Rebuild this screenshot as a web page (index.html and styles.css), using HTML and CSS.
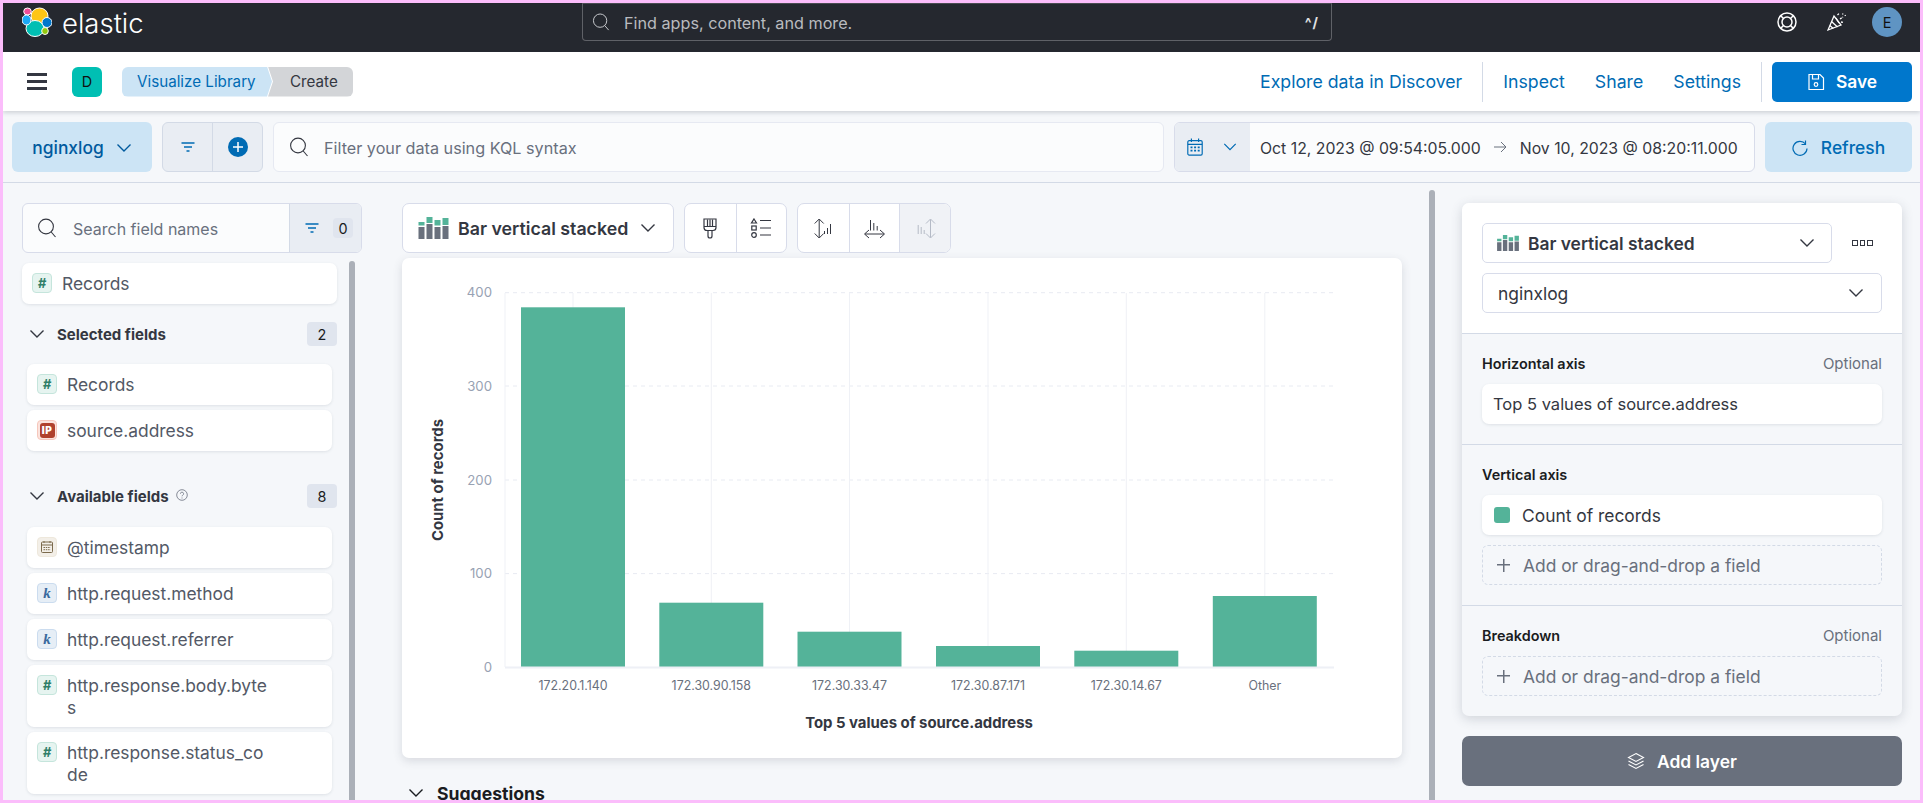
FILE: index.html
```html
<!DOCTYPE html>
<html lang="en">
<head>
<meta charset="utf-8">
<title>Visualize Library - Elastic</title>
<link rel="stylesheet" href="styles.css">
</head>
<body>
<svg class="defs" aria-hidden="true">
  <symbol id="i-search" viewBox="0 0 20 20"><circle cx="9" cy="8.5" r="7.4" fill="none" stroke="currentColor" stroke-width="1.1"/><path d="M14.2 14l4.3 5" fill="none" stroke="currentColor" stroke-width="1.1"/></symbol>
  <symbol id="i-chev" viewBox="0 0 16 16"><path d="M1.5 4.5L8 11l6.5-6.5" fill="none" stroke="currentColor" stroke-width="1.4"/></symbol>
  <symbol id="i-filter" viewBox="0 0 16 16"><path d="M1.5 4h13M4 8h8M6.5 12h3" fill="none" stroke="currentColor" stroke-width="1.3"/></symbol>
  <symbol id="i-bars" viewBox="0 0 30 22"><g fill="#69707d"><path d="M0 10h6v12H0zM8 7h6v15H8zM16 10h6v12h-6zM24 9h6v13h-6z"/></g><g fill="#54b399"><path d="M0 5h6v3.5H0zM8 0h6v6H8zM16 3h6v5.500h-6zM24 1h6v7h-6z"/></g></symbol>
</svg>

<header class="topbar">
  <div class="brand">
    <svg class="logo" viewBox="0 0 30 30" aria-hidden="true">
      <ellipse cx="17.500" cy="9" rx="8.500" ry="8" fill="#fec514" stroke="#fff" stroke-width="1"/>
      <ellipse cx="13" cy="21.500" rx="9" ry="8" fill="#00bfb3" stroke="#fff" stroke-width="1"/>
      <ellipse cx="5.500" cy="4.500" rx="3.800" ry="3.500" fill="#f04e98" stroke="#fff" stroke-width="1"/>
      <ellipse cx="4.500" cy="13" rx="4.500" ry="5" fill="#1ba9f5" stroke="#fff" stroke-width="1"/>
      <ellipse cx="25" cy="15.500" rx="5" ry="5" fill="#0077cc" stroke="#fff" stroke-width="1"/>
      <ellipse cx="23" cy="24" rx="3.300" ry="3.500" fill="#93c90e" stroke="#fff" stroke-width="1"/>
    </svg>
    <span class="brand-name">elastic</span>
  </div>
  <div class="global-search">
    <svg class="ico-18"><use href="#i-search"/></svg>
    <span class="global-text">Find apps, content, and more.</span>
    <span class="kbd">^/</span>
  </div>
  <div class="top-actions">
    <svg class="ico-20" viewBox="0 0 20 20" aria-hidden="true"><g fill="none" stroke="#fff" stroke-width="1.500"><circle cx="10" cy="10" r="9"/><circle cx="10" cy="10" r="5"/><path d="M3.500 3.500l3 3M16.500 3.500l-3 3M3.500 16.500l3-3M16.500 16.500l-3-3"/></g></svg>
    <svg class="ico-20" viewBox="0 0 20 20" aria-hidden="true"><g fill="none" stroke="#fff" stroke-width="1.300"><path d="M7 4L1 18l13-5z"/><path d="M4.500 9.500l6 5.500M2.800 13.500l3.500 3M9 6l3 5"/><path d="M10.500 3l2-2M13 7l3-2M14 10l2 .5M15.500 1.500l.5 1M18 3l.5 1" stroke-dasharray="2 1"/></g></svg>
    <div class="avatar">E</div>
  </div>
</header>

<nav class="appbar">
  <div class="burger"><span></span><span></span><span></span></div>
  <div class="space-badge">D</div>
  <div class="crumbs">
    <span class="crumb crumb-link">Visualize Library</span>
    <span class="crumb crumb-cur">Create</span>
  </div>
  <div class="app-links">
    <a class="app-link link-first">Explore data in Discover</a>
    <span class="app-div"></span>
    <a class="app-link link-inspect">Inspect</a>
    <a class="app-link link-share">Share</a>
    <a class="app-link link-settings">Settings</a>
    <span class="app-div div-last"></span>
    <button class="save-btn">
      <svg class="ico-18" viewBox="0 0 18 18" aria-hidden="true"><g fill="none" stroke="#fff" stroke-width="1.200"><path d="M2 1.500h11l3.500 3.500v11.500H2z"/><path d="M5.500 1.500v4.500h6V1.500"/><circle cx="9" cy="11.500" r="1.800"/></g></svg>
      Save
    </button>
  </div>
</nav>

<section class="querybar">
  <button class="dv-btn">nginxlog <svg class="ico-16"><use href="#i-chev"/></svg></button>
  <div class="filter-group">
    <span class="fg-cell"><svg class="ico-16 blue"><use href="#i-filter"/></svg></span>
    <span class="fg-cell fg-plus"><svg class="ico-20" viewBox="0 0 20 20" aria-hidden="true"><circle cx="10" cy="10" r="10" fill="#006bb4"/><path d="M10 5v10M5 10h10" stroke="#fff" stroke-width="1.500"/></svg></span>
  </div>
  <div class="kql">
    <svg class="ico-20 grey-dark"><use href="#i-search"/></svg>
    <span class="kql-text">Filter your data using KQL syntax</span>
  </div>
  <div class="datepicker">
    <span class="cal-cell">
      <svg class="ico-18" viewBox="0 0 18 20" aria-hidden="true"><g fill="none" stroke="#006bb4" stroke-width="1.300"><rect x="1" y="3" width="16" height="16" rx="1.500"/><path d="M1 7h16M5 0.500v4M13 0.500v4"/></g><path d="M4 9.500h2.200v2H4zM8 9.500h2.200v2H8zM12 9.500h2.200v2H12zM4 13h2.200v2H4zM8 13h2.200v2H8zM12 13h2.200v2H12z" fill="#006bb4"/></svg>
      <svg class="ico-14 blue"><use href="#i-chev"/></svg>
    </span>
    <span class="date-text">Oct 12, 2023 @ 09:54:05.000</span>
    <svg class="date-arrow" viewBox="0 0 14 14" aria-hidden="true"><path d="M1 7h12M8 2l5 5-5 5" fill="none" stroke="#69707d" stroke-width="1"/></svg>
    <span class="date-text">Nov 10, 2023 @ 08:20:11.000</span>
  </div>
  <button class="refresh-btn">
    <svg class="ico-16" viewBox="0 0 16 16" aria-hidden="true"><path d="M13.500 4A7 7 0 1 0 15 8.500" fill="none" stroke="#006bb4" stroke-width="1.200"/><path d="M13.500 0.500V4.500H9.500" fill="none" stroke="#006bb4" stroke-width="1.200"/></svg>
    Refresh
  </button>
</section>

<main class="workspace">
  <aside class="fields">
    <div class="field-search">
      <div class="fs-input">
        <svg class="ico-20 grey-dark"><use href="#i-search"/></svg>
        <span class="fs-text">Search field names</span>
      </div>
      <div class="fs-filter">
        <svg class="ico-16 blue"><use href="#i-filter"/></svg>
        <span class="fs-count">0</span>
      </div>
    </div>
    <div class="fields-body">
      <div class="fields-list">
        <div class="fcard fcard-top"><span class="token t-num">#</span><span class="fname">Records</span></div>
        <div class="acc-head acc-sel">
          <svg class="ico-16"><use href="#i-chev"/></svg>
          <span class="acc-title">Selected fields</span>
          <span class="acc-badge">2</span>
        </div>
        <div class="fcard"><span class="token t-num">#</span><span class="fname">Records</span></div>
        <div class="fcard"><span class="token t-ip"><b>IP</b></span><span class="fname">source.address</span></div>
        <div class="acc-head acc-avail">
          <svg class="ico-16"><use href="#i-chev"/></svg>
          <span class="acc-title">Available fields</span>
          <svg class="help" viewBox="0 0 12 12" aria-hidden="true"><circle cx="6" cy="6" r="5.300" fill="none" stroke="#69707d" stroke-width=".8"/><path d="M4.400 4.700a1.600 1.600 0 1 1 2.300 1.500c-.5.300-.7.500-.7 1.100M6 8.500v1" fill="none" stroke="#69707d" stroke-width=".8"/></svg>
          <span class="acc-badge">8</span>
        </div>
        <div class="fcard"><span class="token t-date"><svg class="ico-14" viewBox="0 0 14 14" aria-hidden="true"><g fill="none" stroke="#7b6a4c" stroke-width="1"><rect x="1.500" y="2" width="11" height="10.500" rx="1"/><path d="M1.500 5h11M4 1v2M10 1v2"/><path d="M3.500 7.500h7M3.500 9.700h7" stroke-dasharray="1.500 .8"/></g></svg></span><span class="fname">@timestamp</span></div>
        <div class="fcard"><span class="token t-key">k</span><span class="fname">http.request.method</span></div>
        <div class="fcard"><span class="token t-key">k</span><span class="fname">http.request.referrer</span></div>
        <div class="fcard"><span class="token t-num">#</span><span class="fname">http.response.body.byte<br>s</span></div>
        <div class="fcard"><span class="token t-num">#</span><span class="fname">http.response.status_co<br>de</span></div>
      </div>
      <div class="scroll-thumb"></div>
    </div>
  </aside>

  <section class="center">
    <div class="chart-tools">
      <button class="type-btn">
        <svg class="type-ico"><use href="#i-bars"/></svg>
        <span>Bar vertical stacked</span>
        <svg class="ico-16"><use href="#i-chev"/></svg>
      </button>
      <div class="tool-group">
        <span class="tool-cell"><svg class="ico-22" viewBox="0 0 22 22" aria-hidden="true"><g fill="none" stroke="#343741" stroke-width="1.200"><path d="M5 2h12v8.500c0 2-1 3-3 3H8c-2 0-3-1-3-3z"/><path d="M5 9.500h12M8.500 2.500v6.500M11 2.500v6.500M13.500 2.500v6.500"/><path d="M9 13.500v5.500a2 2 0 0 0 4 0v-5.500"/></g></svg></span>
        <span class="tool-cell"><svg class="ico-22" viewBox="0 0 22 22" aria-hidden="true"><g fill="none" stroke="#343741" stroke-width="1.200"><path d="M4 2l2.500 4h-5z"/><rect x="1.800" y="9" width="4.400" height="4"/><circle cx="4" cy="18" r="2.300"/><path d="M10 3.500h11M10 11h11M10 18h11"/></g></svg></span>
      </div>
      <div class="tool-group">
        <span class="tool-cell"><svg class="ico-22" viewBox="0 0 22 22" aria-hidden="true"><g fill="none" stroke="#343741" stroke-width="1"><path d="M7.200 2.500v18M2.700 6.500l4.500-4.500 4.500 4.500M2.700 16.500l4.500 4.500 4.500-4.500"/><path d="M12.500 17v-3M15.500 17v-6M18.500 17V7"/></g></svg></span>
        <span class="tool-cell"><svg class="ico-22" viewBox="0 0 22 22" aria-hidden="true"><g fill="none" stroke="#343741" stroke-width="1"><path d="M2 17h19M6 13l-4.500 4 4.500 4M17 13l4.500 4-4.500 4"/><path d="M7.500 13.500V3M10.800 13.500V6M14.200 13.500V9"/></g></svg></span>
        <span class="tool-cell tool-off"><svg class="ico-22" viewBox="0 0 22 22" aria-hidden="true"><g fill="none" stroke="#b4bac6" stroke-width="1"><path d="M16.500 2.500v18M12 6.500l4.500-4.500 4.500 4.500M12 16.500l4.500 4.500 4.500-4.500"/><path d="M4.200 17V8M7.200 17v-7M10.200 17v-4"/></g></svg></span>
      </div>
    </div>

    <div class="chart-card">
      <svg class="chart" viewBox="0 0 1000 500" role="img" aria-label="Bar chart">
        <g class="grid">
          <path class="dash" d="M103 34.700H932M103 128H932M103 222H932M103 315.600H932"/>
          <path d="M103 35V409M171 35V409M309.300 35V409M447.500 35V409M586 35V409M724.300 35V409M862.800 35V409"/>
        </g>
        <g class="bars">
          <rect x="119" y="49.300" width="104" height="360"/>
          <rect x="257.300" y="344.700" width="104" height="64.600"/>
          <rect x="395.500" y="373.700" width="104" height="35.600"/>
          <rect x="534" y="388" width="104" height="21.300"/>
          <rect x="672.300" y="392.700" width="104" height="16.600"/>
          <rect x="810.800" y="338" width="104" height="71.300"/>
        </g>
        <path class="baseline" d="M103 409.600H932"/>
        <g class="ytick">
          <text x="90" y="39">400</text>
          <text x="90" y="132.500">300</text>
          <text x="90" y="226.500">200</text>
          <text x="90" y="319.500">100</text>
          <text x="90" y="413.500">0</text>
        </g>
        <g class="xtick">
          <text x="171" y="431.500">172.20.1.140</text>
          <text x="309.300" y="431.500">172.30.90.158</text>
          <text x="447.500" y="431.500">172.30.33.47</text>
          <text x="586" y="431.500">172.30.87.171</text>
          <text x="724.300" y="431.500">172.30.14.67</text>
          <text x="862.800" y="431.500">Other</text>
        </g>
        <text class="axis-title" x="517" y="470">Top 5 values of source.address</text>
        <text class="axis-title" transform="translate(41 222) rotate(-90)">Count of records</text>
      </svg>
    </div>

    <div class="suggestions">
      <svg class="ico-16"><use href="#i-chev"/></svg>
      <span>Suggestions</span>
    </div>
  </section>

  <div class="splitter"></div>

  <aside class="config">
    <div class="config-card">
      <div class="config-top">
        <div class="config-row">
          <button class="select select-type">
            <svg class="mini-bars"><use href="#i-bars"/></svg>
            <span class="select-label">Bar vertical stacked</span>
            <svg class="ico-16"><use href="#i-chev"/></svg>
          </button>
          <span class="dots"><i></i><i></i><i></i></span>
        </div>
        <button class="select select-index">
          <span class="select-plain">nginxlog</span>
          <svg class="ico-16"><use href="#i-chev"/></svg>
        </button>
      </div>
      <div class="config-sec">
        <div class="sec-head"><b>Horizontal axis</b><span>Optional</span></div>
        <div class="dim">Top 5 values of source.address</div>
      </div>
      <div class="config-sec">
        <div class="sec-head"><b>Vertical axis</b></div>
        <div class="dim dim-color"><span class="swatch"></span>Count of records</div>
        <div class="add-field add-gap"><span class="plus"></span>Add or drag-and-drop a field</div>
      </div>
      <div class="config-sec">
        <div class="sec-head"><b>Breakdown</b><span>Optional</span></div>
        <div class="add-field"><span class="plus"></span>Add or drag-and-drop a field</div>
      </div>
    </div>
    <button class="add-layer">
      <svg class="ico-18" viewBox="0 0 18 18" aria-hidden="true"><g fill="none" stroke="#fff" stroke-width="1.100"><path d="M9 1.500l7.500 4L9 9.500l-7.500-4z"/><path d="M1.500 9L9 13l7.500-4M1.500 12.500L9 16.500l7.500-4"/></g></svg>
      Add layer
    </button>
  </aside>
</main>
</body>
</html>
```

FILE: styles.css
```css
* { box-sizing: border-box; }
html, body { margin: 0; height: 100%; }
body {
  width: 1923px;
  height: 803px;
  overflow: hidden;
  border: 3px solid #fbbdfb;
  background: #f5f7fa;
  font-family: Inter, "Noto Sans", "Liberation Sans", sans-serif;
  font-size: 17.4px;
  color: #343741;
  display: flex;
  flex-direction: column;
}
button { font: inherit; border: 0; padding: 0; cursor: pointer; }
.defs { position: absolute; width: 0; height: 0; }
.ico-14 { width: 14px; height: 14px; flex: none; }
.ico-16 { width: 16px; height: 16px; flex: none; }
.ico-18 { width: 18px; height: 18px; flex: none; }
.ico-20 { width: 20px; height: 20px; flex: none; }
.ico-22 { width: 22px; height: 22px; flex: none; }
.blue { color: #006bb4; }
.grey-dark { color: #343741; }

/* top bar */
.topbar {
  height: 49px;
  flex: none;
  background: #25282f;
  display: flex;
  align-items: flex-start;
  color: #fff;
  position: relative;
}
.brand { display: flex; align-items: center; width: 579px; padding: 4px 0 0 19px; height: 34px; }
.logo { width: 30px; height: 30px; flex: none; }
.brand-name { margin-left: 10px; font-size: 27.5px; font-weight: 300; padding-top: 1px; line-height: 30px; color: #fff; }
.global-search {
  width: 750px;
  height: 38px;
  border: 1px solid #5f6167;
  border-top-color: #4a4c52;
  border-radius: 0 0 4px 4px;
  display: flex;
  align-items: center;
  padding: 0 12px 0 9px;
  color: #c6c8cc;
  background: #25282f;
}
.global-text { margin-left: 14px; flex: 1; font-size: 16.2px; color: #b9bbbf; padding-top: 2px; }
.kbd { font-size: 14px; font-weight: 700; color: #e0e0e2; letter-spacing: 1px; }
.top-actions { flex: 1; display: flex; align-items: center; height: 30px; margin-top: 4px; padding-left: 445px; }
.top-actions .ico-20:nth-child(2) { margin-left: 30px; }
.avatar {
  width: 30px; height: 30px; margin-left: 25px; border-radius: 50%;
  background: #5f94c3; color: #111; font-size: 14.4px;
  display: flex; align-items: center; justify-content: center;
}

/* app bar */
.appbar {
  height: 59px;
  flex: none;
  background: #fff;
  display: flex;
  align-items: center;
  box-shadow: 0 2px 4px rgba(60, 70, 90, .2);
  position: relative;
  z-index: 2;
}
.burger { width: 20px; margin-left: 24px; display: flex; flex-direction: column; gap: 4.500px; }
.burger span { height: 2.500px; background: #343741; display: block; }
.space-badge {
  width: 30px; height: 30px; margin-left: 25px; border-radius: 6px;
  background: #00bfb3; color: #111; font-size: 14.4px;
  display: flex; align-items: center; justify-content: center;
}
.crumbs { display: flex; margin-left: 20px; height: 30px; font-size: 15.2px; }
.crumb { display: flex; align-items: center; height: 30px; }
.crumb-link {
  width: 150px; padding-left: 15px; background: #cce4f5; color: #006bb4; white-space: nowrap;
  border-radius: 6px 0 0 6px;
  clip-path: polygon(0 0, 145px 0, 100% 50%, 145px 100%, 0 100%);
}
.crumb-cur {
  width: 85px; margin-left: -4px; padding-left: 22px; background: #d3d5d8; color: #343741;
  border-radius: 0 6px 6px 0;
  clip-path: polygon(0 0, 100% 0, 100% 100%, 0 100%, 5px 50%);
}
.app-links { margin-left: auto; display: flex; align-items: center; padding-right: 8px; }
.app-link { color: #006bb4; font-size: 17.7px; white-space: nowrap; }
.app-div { width: 1px; height: 40px; background: #d3dae6; margin: 0 20px; }
.link-share { margin-left: 30px; }
.link-settings { margin-left: 30px; }
.div-last { margin: 0 10px 0 20px; }
.save-btn {
  width: 140px; height: 40px; border-radius: 5px; background: #0077cc; color: #fff;
  display: flex; align-items: center; justify-content: center; gap: 11px; font-weight: 600;
}

/* query bar */
.querybar {
  height: 72px;
  flex: none;
  border-bottom: 1px solid #d3dae6;
  padding: 11px 6px 0 9px;
  display: flex;
  align-items: flex-start;
  gap: 10px;
}
.querybar > * { height: 50px; }
.dv-btn {
  width: 140px; border-radius: 6px; background: #cce4f5; color: #005a9e; padding-top: 1px;
  display: flex; align-items: center; justify-content: center; gap: 12px; font-weight: 500;
}
.filter-group {
  width: 101px; display: flex; background: #e9edf3; border: 1px solid #d3dae6; border-radius: 6px;
}
.fg-cell { flex: 1; display: flex; align-items: center; justify-content: center; }
.fg-plus { border-left: 1px solid #d3dae6; }
.kql {
  width: 891px; background: #fbfcfd; border: 1px solid #e6e9f2; border-radius: 6px;
  display: flex; align-items: center; padding-left: 15px;
}
.kql-text { margin-left: 15px; color: #69707d; font-size: 16.2px; padding-top: 2px; }
.datepicker {
  width: 581px; background: #fbfcfd; border: 1px solid #d8dcea; border-radius: 6px;
  display: flex; align-items: center; overflow: hidden; white-space: nowrap;
}
.cal-cell {
  width: 75px; height: 100%; flex: none; background: #e9edf3; display: flex; align-items: center;
  padding-left: 11px; gap: 19px;
}
.date-text { color: #343741; font-size: 15.8px; padding-top: 2px; }
.cal-cell + .date-text { margin-left: 10px; }
.date-arrow { width: 14px; height: 14px; margin: 0 13px 0 12px; flex: none; }
.refresh-btn {
  width: 147px; border-radius: 6px; background: #cce4f5; color: #006bb4; padding-top: 1px;
  display: flex; align-items: center; justify-content: center; gap: 13px; font-weight: 500;
}

/* workspace */
.workspace { flex: 1; min-height: 0; display: flex; overflow: hidden; }
.fields { width: 399px; flex: none; padding: 20px 0 0 19px; }
.field-search {
  width: 340px; height: 50px; display: flex; background: #fbfcfd;
  border: 1px solid #d8dcea; border-radius: 6px; overflow: hidden;
}
.fs-input { flex: 1; display: flex; align-items: center; padding-left: 14px; }
.fs-text { margin-left: 16px; color: #69707d; font-size: 16px; padding-top: 2px; }
.fs-filter {
  width: 72px; background: #e9edf3; border-left: 1px solid #d3dae6;
  display: flex; align-items: center; padding-left: 14px; gap: 13px;
}
.fs-count {
  width: 20px; height: 20px; background: #e0e5ee; border-radius: 4px; font-size: 14.4px; color: #1a1c21;
  display: flex; align-items: center; justify-content: center;
}
.fields-body { display: flex; margin-top: 8px; height: 540px; }
.fields-list { width: 315px; padding-top: 2px; flex: none; }
.scroll-thumb { width: 6px; margin-left: 12px; background: #abb0b8; border-radius: 3px 3px 0 0; flex: none; height: 545px; }
.fcard {
  min-height: 41px; margin: 0 5px 5px; padding: 10px 10px 9px 10px; background: #fff; border-radius: 7px;
  box-shadow: 0 1px 3px rgba(60, 70, 90, .12);
  display: flex; align-items: flex-start;
}
.fcard-top { margin: 0; }
.token {
  width: 20px; height: 20px; flex: none; border-radius: 4px; border: 1px solid;
  display: flex; align-items: center; justify-content: center; font-size: 13px; font-weight: 700; font-style: italic; margin-top: 0;
}
.t-num { background: #e6f4f0; border-color: #c5e5dc; color: #2f7f68; }
.t-key { background: #e6eef6; border-color: #cbdcef; color: #3a6a9e; font-family: "Liberation Serif", serif; font-size: 15px; }
.t-date { background: #f3efe8; border-color: #eee8dc; }
.t-ip { background: #fbe3dd; border-color: #f6c7bc; }
.t-ip b { background: #b0412d; color: #fff; font-size: 10px; font-style: normal; width: 15px; height: 15px; border-radius: 3px; display: flex; align-items: center; justify-content: center; letter-spacing: .5px; }
.fname { margin-left: 10px; color: #535966; line-height: 21.5px; }
.acc-head { display: flex; align-items: center; padding-left: 7px; height: 24px; }
.acc-head .ico-16 { width: 16px; height: 16px; }
.acc-sel { margin: 18px 0 18px; }
.acc-avail { margin: 33px 0 19px; }
.acc-title { margin-left: 12px; font-size: 15px; font-weight: 700; color: #343741; }
.help { width: 12px; height: 12px; margin-left: 7px; margin-top: -3px; }
.acc-badge {
  margin-left: auto; width: 30px; height: 24px; border-radius: 4px; background: #e0e5ee; color: #1a1c21;
  font-size: 14.4px; display: flex; align-items: center; justify-content: center;
}

/* centre */
.center { width: 1005px; flex: none; padding-top: 20px; }
.chart-tools { display: flex; gap: 10px; height: 50px; }
.type-btn {
  width: 272px; background: #fff; border: 1px solid #d8dcea; border-radius: 7px;
  display: flex; align-items: center; padding-left: 15px; font-weight: 600; color: #343741; font-size: 17.8px;
}
.type-ico { width: 31px; height: 22px; flex: none; }
.type-btn span { margin-left: 9px; flex: none; }
.type-btn .ico-16 { margin-left: 12px; }
.tool-group { display: flex; background: #fff; border: 1px solid #d8dcea; border-radius: 7px; overflow: hidden; }
.tool-cell { width: 50.500px; display: flex; align-items: center; justify-content: center; }
.tool-cell + .tool-cell { border-left: 1px solid #d8dcea; }
.tool-off { background: #f0f2f6; }
.chart-card {
  width: 1000px; height: 500px; margin-top: 5px; background: #fff; border-radius: 7px;
  box-shadow: 0 3px 10px rgba(60, 70, 90, .16);
}
.chart { display: block; width: 1000px; height: 500px; }
.grid path { fill: none; stroke: #eff1f6; stroke-width: 1; }
.grid .dash { stroke: #e8ebf2; stroke-dasharray: 4 4; }
.bars rect { fill: #54b399; }
.baseline { stroke: #eef0f6; stroke-width: 2; fill: none; }
.ytick text { text-anchor: end; font-size: 13.2px; fill: #98a2b3; font-family: Inter, sans-serif; }
.xtick text { text-anchor: middle; font-size: 12.4px; fill: #69707d; font-family: Inter, sans-serif; }
.axis-title { text-anchor: middle; font-size: 14.9px; font-weight: 700; fill: #343741; font-family: Inter, sans-serif; }
.suggestions { display: flex; align-items: center; gap: 13px; margin-top: 23px; padding-left: 6px; font-weight: 700; color: #1a1c21; height: 24px; font-size: 17.6px; }

.splitter { width: 6px; flex: none; margin: 7px 0 0 22px; background: #abb0b8; border-radius: 3px 3px 0 0; }

/* config */
.config { width: 440px; flex: none; margin-left: 27px; padding-top: 20px; }
.config-card { background: #f5f7fa; border-radius: 7px; overflow: hidden; box-shadow: 0 3px 12px rgba(60, 70, 90, .2); }
.config-top { background: #fff; padding: 20px 20px 20px; height: 130px; }
.config-row { display: flex; align-items: center; }
.select {
  background: #fff; border: 1px solid #d8dcea; border-radius: 5px; height: 40px;
  display: flex; align-items: center; color: #343741; text-align: left;
}
.select-type { width: 350px; padding: 0 16px 0 14px; font-weight: 600; }
.mini-bars { width: 22px; height: 16px; flex: none; }
.select-label { margin-left: 9px; flex: 1; }
.dots { display: flex; gap: 2px; margin-left: 20px; }
.dots i { width: 5.500px; height: 5.500px; border: 1px solid #343741; display: block; }
.select-index { width: 400px; margin-top: 10px; padding: 0 17px 0 15px; }
.select-plain { flex: 1; }
.config-sec { border-top: 1px solid #d3dae6; padding: 20px 20px 20px; }
.sec-head { display: flex; justify-content: space-between; font-size: 14.4px; line-height: 20px; margin-bottom: 10px; }
.sec-head b { font-weight: 600; color: #1a1c21; }
.sec-head span { color: #69707d; font-size: 15px; }
.dim {
  height: 40px; background: #fff; border-radius: 7px; box-shadow: 0 1px 3px rgba(60, 70, 90, .12);
  display: flex; align-items: center; padding-left: 11px; color: #343741; font-size: 16.5px;
}
.dim-color { font-size: 17.4px; }
.swatch { width: 16px; height: 16px; border-radius: 3px; background: #54b399; margin-right: 12px; margin-left: 1px; }
.add-field {
  height: 40px; border: 1px dashed #d3dae6; border-radius: 6px; color: #69707d;
  display: flex; align-items: center; padding-left: 14px;
}
.add-gap { margin-top: 10px; }
.plus { width: 13px; height: 13px; margin-right: 13px; position: relative; background: linear-gradient(#69707d, #69707d) center / 100% 1.500px no-repeat, linear-gradient(#69707d, #69707d) center / 1.500px 100% no-repeat; }
.add-layer {
  width: 440px; height: 50px; margin-top: 20px; background: #69707d; color: #fff; border-radius: 7px;
  display: flex; align-items: center; justify-content: center; gap: 12px; font-weight: 600;
}
```
